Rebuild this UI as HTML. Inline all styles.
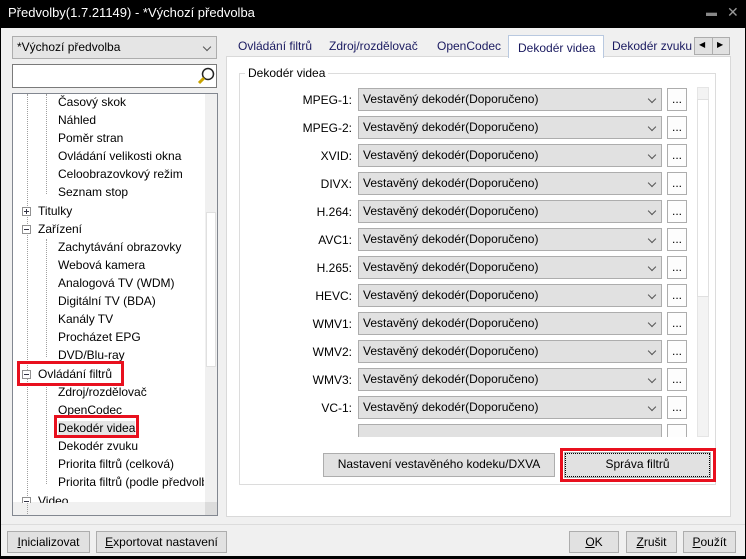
<!DOCTYPE html>
<html><head><meta charset="utf-8"><style>
*{box-sizing:border-box;margin:0;padding:0}
body{width:746px;height:559px;background:#000;font-family:"Liberation Sans",sans-serif;font-size:12px;color:#000;position:relative;overflow:hidden}
.a{position:absolute}
#win{left:1px;top:28px;width:744px;height:528px;background:#f0f0f0}
.title{left:8px;top:5px;color:#fff;font-size:13px}
.btn{position:absolute;background:#e1e1e1;border:1px solid #adadad;text-align:center;line-height:20px;font-size:12px}
.cb{position:absolute;background:#e1e1e1;border:1px solid #adadad;line-height:20px;padding-left:4px;font-size:12px}
.chev{position:absolute;right:6px;top:7px;width:6px;height:6px;border-right:1px solid #555;border-bottom:1px solid #555;transform:rotate(45deg)}
.lbl{position:absolute;text-align:right;width:120px;font-size:12px}
.dot{position:absolute;border-left:1px dotted #a0a0a0}
.dh{position:absolute;border-top:1px dotted #a0a0a0;width:8px}
.ti{position:absolute;font-size:12px;white-space:nowrap}
.red{position:absolute;border:3px solid #e8101e}
.pm{position:absolute;width:9px;height:9px;border:1px solid #919191;background:#fff}
.pm:before{content:"";position:absolute;left:1px;top:3px;width:5px;height:1px;background:#334}
</style></head><body>
<div class="a title">Předvolby(1.7.21149) - *Výchozí předvolba</div>
<div class="a" style="left:706px;top:7px;color:#888;font-size:11px">&#9644;</div>
<div class="a" style="left:727px;top:4px;color:#999;font-size:14px">✕</div>
<div id="win" class="a">
</div>
<!-- left -->
<div class="cb" style="left:12px;top:36px;width:205px;height:23px;background:#e5e5e5">*Výchozí předvolba<div class="chev"></div></div>
<div class="a" style="left:12px;top:64px;width:205px;height:24px;background:#fff;border:1px solid #7a7a7a"></div>
<svg class="a" style="left:196px;top:66px" width="20" height="20"><circle cx="12" cy="8" r="5.5" fill="none" stroke="#222" stroke-width="1.5"/><line x1="8" y1="12" x2="3" y2="17" stroke="#c9a300" stroke-width="3"/></svg>
<div class="a" style="left:12px;top:93px;width:206px;height:423px;background:#fff;border:1px solid #828790;overflow:hidden">
 <div class="a" style="left:192px;top:0;width:12px;height:408px;background:#f0f0f0"></div>
 <div class="a" style="left:193px;top:118px;width:10px;height:155px;background:#fff;border:1px solid #e0e0e0"></div>
 <div class="a" style="left:0;top:408px;width:204px;height:13px;background:#f0f0f0"></div>
 <div class="a" style="left:192px;top:408px;width:12px;height:13px;background:#dcdcdc"></div>
 <div class="dot" style="left:14px;top:0;height:420px"></div>
 <div class="dot" style="left:33px;top:0;height:100px"></div>
 <div class="dot" style="left:33px;top:145px;height:118px"></div>
 <div class="dot" style="left:33px;top:290px;height:100px"></div>
</div>
<div class="a" style="left:12px;top:93px;width:192px;height:410px;overflow:hidden">
 <div class="ti" style="left:46px;top:2px">Časový skok</div>
 <div class="ti" style="left:46px;top:20px">Náhled</div>
 <div class="ti" style="left:46px;top:38px">Poměr stran</div>
 <div class="ti" style="left:46px;top:56px">Ovládání velikosti okna</div>
 <div class="ti" style="left:46px;top:74px">Celoobrazovkový režim</div>
 <div class="ti" style="left:46px;top:92px">Seznam stop</div>
 <div class="ti" style="left:26px;top:111px">Titulky</div>
 <div class="ti" style="left:26px;top:129px">Zařízení</div>
 <div class="ti" style="left:46px;top:147px">Zachytávání obrazovky</div>
 <div class="ti" style="left:46px;top:165px">Webová kamera</div>
 <div class="ti" style="left:46px;top:183px">Analogová TV (WDM)</div>
 <div class="ti" style="left:46px;top:201px">Digitální TV (BDA)</div>
 <div class="ti" style="left:46px;top:219px">Kanály TV</div>
 <div class="ti" style="left:46px;top:237px">Procházet EPG</div>
 <div class="ti" style="left:46px;top:255px">DVD/Blu-ray</div>
 <div class="ti" style="left:26px;top:274px">Ovládání filtrů</div>
 <div class="ti" style="left:46px;top:292px">Zdroj/rozdělovač</div>
 <div class="ti" style="left:46px;top:310px">OpenCodec</div>
 <div class="ti" style="left:46px;top:328px;background:#e5e5e5">Dekodér videa</div>
 <div class="ti" style="left:46px;top:346px">Dekodér zvuku</div>
 <div class="ti" style="left:46px;top:364px">Priorita filtrů (celková)</div>
 <div class="ti" style="left:46px;top:382px">Priorita filtrů (podle předvolby)</div>
 <div class="ti" style="left:26px;top:401px">Video</div>
 <div class="pm" style="left:10px;top:114px"></div><div class="a" style="left:14px;top:116px;width:1px;height:5px;background:#334"></div>
 <div class="pm" style="left:10px;top:132px"></div>
 <div class="pm" style="left:10px;top:277px"></div>
 <div class="pm" style="left:10px;top:404px"></div>
</div>
<div class="red" style="left:17px;top:361px;width:107px;height:25px"></div>
<div class="red" style="left:54px;top:415px;width:85px;height:23px"></div>
<!-- tabs -->
<div class="a" style="left:226px;top:56px;width:505px;height:461px;background:#fff;border:1px solid #d9d9d9"></div>
<div class="ti" style="left:238px;top:39px;color:#1a1a60">Ovládání filtrů</div>
<div class="ti" style="left:329px;top:39px;color:#1a1a60">Zdroj/rozdělovač</div>
<div class="ti" style="left:437px;top:39px;color:#1a1a60">OpenCodec</div>
<div class="a" style="left:508px;top:35px;width:96px;height:23px;background:#fff;border:1px solid #b9c9e0;border-bottom:none"></div>
<div class="ti" style="left:518px;top:41px;color:#1a1a60">Dekodér videa</div>
<div class="ti" style="left:612px;top:39px;color:#1a1a60">Dekodér zvuku</div>
<div class="a" style="left:694px;top:37px;width:36px;height:18px;background:#e1e1e1;border:1px solid #adadad"></div>
<div class="a" style="left:712px;top:38px;width:1px;height:16px;background:#adadad"></div>
<div class="a" style="left:699px;top:40px;font-size:8px">◀</div><div class="a" style="left:717px;top:40px;font-size:8px">▶</div>
<!-- group -->
<div class="a" style="left:239px;top:73px;width:477px;height:412px;border:1px solid #dcdcdc"></div>
<div class="ti" style="left:245px;top:66px;background:#fff;padding:0 3px">Dekodér videa</div>
<div class="a" style="left:697px;top:87px;width:12px;height:350px;background:#f3f3f3;border:1px solid #e5e5e5"></div>
<div class="a" style="left:697px;top:99px;width:12px;height:198px;background:#fff;border:1px solid #e0e0e0"></div>
<div class="a" style="left:242px;top:86px;width:452px;height:351px;overflow:hidden">
<div class="lbl" style="left:-10px;top:7px">MPEG-1:</div><div class="cb" style="left:116px;top:2px;width:304px;height:23px">Vestavěný dekodér(Doporučeno)<div class="chev"></div></div><div class="btn" style="left:425px;top:2px;width:20px;height:23px;background:#fdfdfd">...</div>
<div class="lbl" style="left:-10px;top:35px">MPEG-2:</div><div class="cb" style="left:116px;top:30px;width:304px;height:23px">Vestavěný dekodér(Doporučeno)<div class="chev"></div></div><div class="btn" style="left:425px;top:30px;width:20px;height:23px;background:#fdfdfd">...</div>
<div class="lbl" style="left:-10px;top:63px">XVID:</div><div class="cb" style="left:116px;top:58px;width:304px;height:23px">Vestavěný dekodér(Doporučeno)<div class="chev"></div></div><div class="btn" style="left:425px;top:58px;width:20px;height:23px;background:#fdfdfd">...</div>
<div class="lbl" style="left:-10px;top:91px">DIVX:</div><div class="cb" style="left:116px;top:86px;width:304px;height:23px">Vestavěný dekodér(Doporučeno)<div class="chev"></div></div><div class="btn" style="left:425px;top:86px;width:20px;height:23px;background:#fdfdfd">...</div>
<div class="lbl" style="left:-10px;top:119px">H.264:</div><div class="cb" style="left:116px;top:114px;width:304px;height:23px">Vestavěný dekodér(Doporučeno)<div class="chev"></div></div><div class="btn" style="left:425px;top:114px;width:20px;height:23px;background:#fdfdfd">...</div>
<div class="lbl" style="left:-10px;top:147px">AVC1:</div><div class="cb" style="left:116px;top:142px;width:304px;height:23px">Vestavěný dekodér(Doporučeno)<div class="chev"></div></div><div class="btn" style="left:425px;top:142px;width:20px;height:23px;background:#fdfdfd">...</div>
<div class="lbl" style="left:-10px;top:175px">H.265:</div><div class="cb" style="left:116px;top:170px;width:304px;height:23px">Vestavěný dekodér(Doporučeno)<div class="chev"></div></div><div class="btn" style="left:425px;top:170px;width:20px;height:23px;background:#fdfdfd">...</div>
<div class="lbl" style="left:-10px;top:203px">HEVC:</div><div class="cb" style="left:116px;top:198px;width:304px;height:23px">Vestavěný dekodér(Doporučeno)<div class="chev"></div></div><div class="btn" style="left:425px;top:198px;width:20px;height:23px;background:#fdfdfd">...</div>
<div class="lbl" style="left:-10px;top:231px">WMV1:</div><div class="cb" style="left:116px;top:226px;width:304px;height:23px">Vestavěný dekodér(Doporučeno)<div class="chev"></div></div><div class="btn" style="left:425px;top:226px;width:20px;height:23px;background:#fdfdfd">...</div>
<div class="lbl" style="left:-10px;top:259px">WMV2:</div><div class="cb" style="left:116px;top:254px;width:304px;height:23px">Vestavěný dekodér(Doporučeno)<div class="chev"></div></div><div class="btn" style="left:425px;top:254px;width:20px;height:23px;background:#fdfdfd">...</div>
<div class="lbl" style="left:-10px;top:287px">WMV3:</div><div class="cb" style="left:116px;top:282px;width:304px;height:23px">Vestavěný dekodér(Doporučeno)<div class="chev"></div></div><div class="btn" style="left:425px;top:282px;width:20px;height:23px;background:#fdfdfd">...</div>
<div class="lbl" style="left:-10px;top:315px">VC-1:</div><div class="cb" style="left:116px;top:310px;width:304px;height:23px">Vestavěný dekodér(Doporučeno)<div class="chev"></div></div><div class="btn" style="left:425px;top:310px;width:20px;height:23px;background:#fdfdfd">...</div>
<div class="cb" style="left:116px;top:338px;width:304px;height:23px"></div><div class="btn" style="left:425px;top:338px;width:20px;height:23px;background:#fdfdfd"></div>
</div>
<div class="btn" style="left:323px;top:453px;width:232px;height:24px">Nastavení vestavěného kodeku/DXVA</div>
<div class="btn" style="left:565px;top:453px;width:145px;height:24px;border:1px dotted #000;outline:1px solid #adadad">Správa filtrů</div>
<div class="red" style="left:560px;top:448px;width:156px;height:34px"></div>
<!-- bottom -->
<div class="a" style="left:1px;top:524px;width:744px;height:1px;background:#dcdcdc"></div>
<div class="btn" style="left:7px;top:531px;width:83px;height:22px"><u>I</u>nicializovat</div>
<div class="btn" style="left:96px;top:531px;width:131px;height:22px"><u>E</u>xportovat nastavení</div>
<div class="btn" style="left:569px;top:531px;width:50px;height:22px"><u>O</u>K</div>
<div class="btn" style="left:626px;top:531px;width:51px;height:22px"><u>Z</u>rušit</div>
<div class="btn" style="left:683px;top:531px;width:53px;height:22px"><u>P</u>oužít</div>
</body></html>
